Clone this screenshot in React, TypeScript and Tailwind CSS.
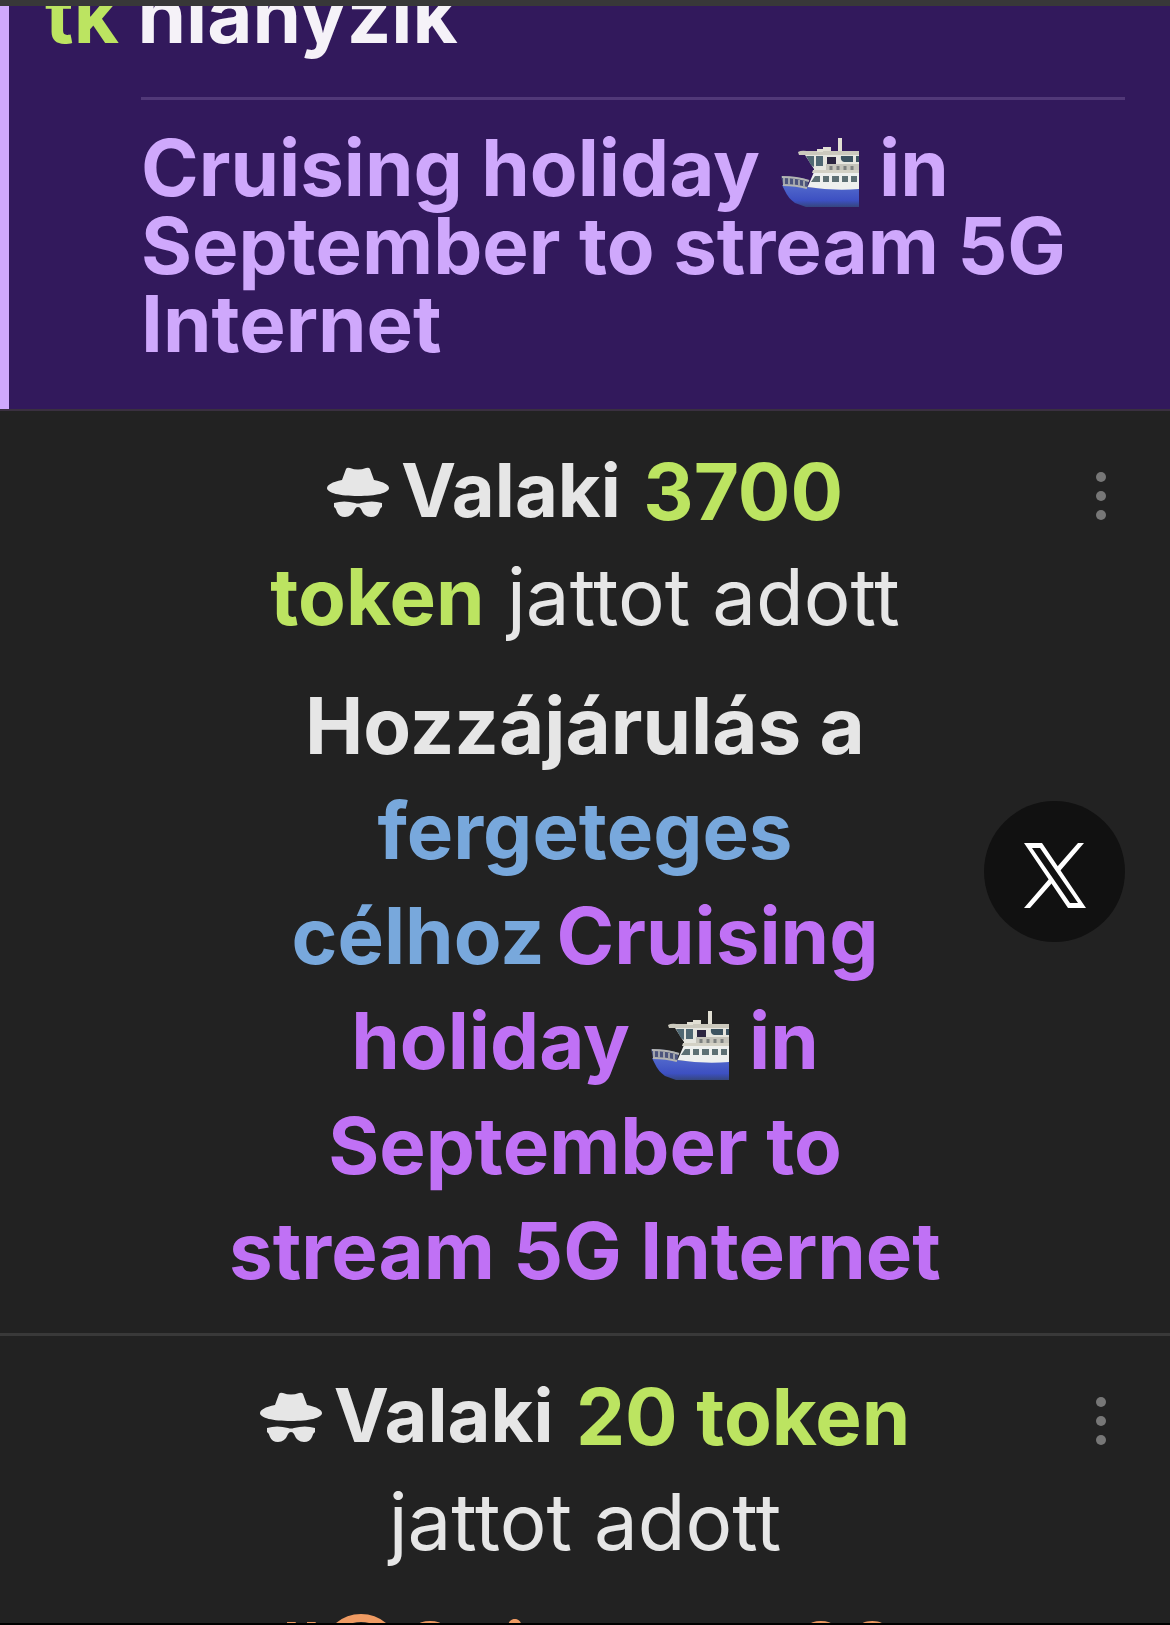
function HatIcon() {
  return (
    <svg viewBox="0 0 62 50" className="h-[50px] w-[62px]" fill="currentColor" aria-hidden="true">
      <path d="M15 13L19 2Q20 0 23 1Q31 4 39 1Q42 0 43 2L47 13C57 15 62 18 62 21C62 26 49 29 31 29C13 29 0 26 0 21C0 18 5 15 15 13Z" />
      <path d="M7 36Q17 33 28 36Q31 37 34 36Q45 33 55 36V40Q53 41 52 45Q50 50 44 50Q37 50 34 42Q33 40 31 40Q29 40 28 42Q25 50 18 50Q12 50 10 45Q9 41 7 40Z" />
    </svg>
  )
}

function ShipIcon() {
  return (
    <svg viewBox="0 0 78 70" className="mx-[2px] -mb-2 inline-block h-[70px] w-[78px] align-[-4px]" role="img" aria-label="ship">
      <defs>
        <linearGradient id="hull" x1="0" y1="0" x2="0" y2="1">
          <stop offset="0" stopColor="#5269cc" />
          <stop offset="0.7" stopColor="#3d50c2" />
          <stop offset="1" stopColor="#35467e" />
        </linearGradient>
      </defs>
      <path d="M1 47Q14 47 26 49Q52 52 78 50V69H25L14 65Q7 60 4 53Z" fill="url(#hull)" />
      <path d="M27 48L33 34H78V51Q52 53 26 49Z" fill="#eef0ee" />
      <path d="M0 38Q16 38 28 42L27 46L26 50Q14 47 2 47Z" fill="#4c547c" />
      <path d="M1 39Q16 39 28 43M2 47Q15 47 26 50" fill="none" stroke="#b4b5b3" strokeWidth="2" />
      <path d="M3 40V46M8 40V47M13 41V47M18 42V48M23 43V49" stroke="#a0a3aa" strokeWidth="2" />
      <path d="M24 17H78V34H33V31Z" fill="#e6e6df" />
      <path d="M17 14Q20 12 26 13H78V17H18Z" fill="#cbc9bd" />
      <path d="M57 0H61V13H57ZM42 9H50V13H42ZM36 11H42V14H36Z" fill="#e1dfd3" />
      <path d="M25 18H33V29L30 27ZM35 18H42V28H35Z" fill="#506873" />
      <path d="M46 19H55V31H46Z" fill="#2b2540" />
      <path d="M60 18H72V24H63Q59 23 60 18ZM75 18H78V24H75Z" fill="#3c5360" />
      <path d="M45 26H78V34H45Z" fill="#c5c4bb" />
      <path d="M50 28V33M57 28V33M64 28V33M71 28V33" stroke="#7d807f" strokeWidth="3" />
      <path d="M32 32H78V35H31Z" fill="#d3d1c5" />
      <path d="M34 38H39V44H30ZM42 38H48V44H42ZM51 38H58V44H51ZM61 38H67V44H61ZM70 38H76V44H70Z" fill="#5d7074" />
    </svg>
  )
}

function SpinIcon() {
  return (
    <svg viewBox="0 0 78 78" className="mr-1 inline-block size-[78px] align-[-13px]" fill="none" aria-hidden="true">
      <circle cx="39" cy="39" r="35" stroke="currentColor" strokeWidth="8" />
    </svg>
  )
}

function Anonymous() {
  return (
    <span className="mr-1 inline-flex items-baseline gap-3 align-[3px] text-[74px] leading-none">
      <HatIcon />
      Valaki
    </span>
  )
}

function MenuButton() {
  return (
    <button type="button" aria-label="Menu" className="absolute top-[61px] right-[64px] text-[#777777]">
      <svg viewBox="0 0 10 48" className="h-12 w-[10px]" fill="currentColor" aria-hidden="true">
        <circle cx="5" cy="5" r="5" />
        <circle cx="5" cy="24" r="5" />
        <circle cx="5" cy="43" r="5" />
      </svg>
    </button>
  )
}

export default function App() {
  return (
    <main className="h-screen overflow-hidden border-b-2 border-black bg-[#222222] font-[Inter,sans-serif] text-[78px] font-bold text-[#e6e6e6] [font-optical-sizing:none] [font-variant-ligatures:none]">
      <section className="border-t-[6px] border-b-2 border-t-[#383838] border-b-[#3a3040] bg-[#32195c]">
        <div className="overflow-hidden border-l-[9px] border-[#cfa8fc] pr-[45px] pb-[46px]">
          <p className="-mt-[37px] pl-9 leading-[92px] text-[#f5f2f8]">
            <span className="text-[#bce461]">tk</span> hiányzik
          </p>
          <div className="mt-9 ml-[132px] border-t-[3px] border-[#513878] pt-[29px]">
            <h1 className="leading-[78px] text-[#cfa8fc]">
              Cruising holiday <ShipIcon /> in September to stream 5G Internet
            </h1>
          </div>
        </div>
      </section>

      <section className="relative border-b-[3px] border-[#393939] px-[222px] pt-7 pb-[30px] text-center leading-[105px]">
        <p>
          <Anonymous /> <span className="text-[#bce461]">3700 token</span>{" "}
          <span className="ml-1 font-normal">jattot adott</span>
        </p>
        <p className="mt-6">
          Hozzájárulás a <span className="text-[#78a8dc]">fergeteges célhoz</span>
          <span className="ml-3 text-[#c071f5]">Cruising holiday <ShipIcon /> in September to stream 5G Internet</span>
        </p>
        <MenuButton />
        <button type="button" aria-label="X" className="absolute top-[390px] right-[45px] flex size-[141px] items-center justify-center rounded-full bg-[#111111]">
          <svg viewBox="0 0 62 65" className="mt-2 h-[65px] w-[62px]" fill="white" aria-hidden="true">
            <path fillRule="evenodd" d="M0 0H18L62 65H44ZM8 5L46 60H54L16 5Z" />
            <path d="M54 0H60L36 28L33 24ZM0 65H6L28 40L25 36Z" />
          </svg>
        </button>
      </section>

      <section className="relative px-[222px] pt-7 text-center leading-[105px]">
        <p>
          <Anonymous /> <span className="text-[#bce461]">20 token</span>{" "}
          <span className="font-normal">jattot adott</span>
        </p>
        <p className="mt-6 text-[#ef9b63]">
          #<SpinIcon />Spin zone 20
        </p>
        <MenuButton />
      </section>
    </main>
  )
}
